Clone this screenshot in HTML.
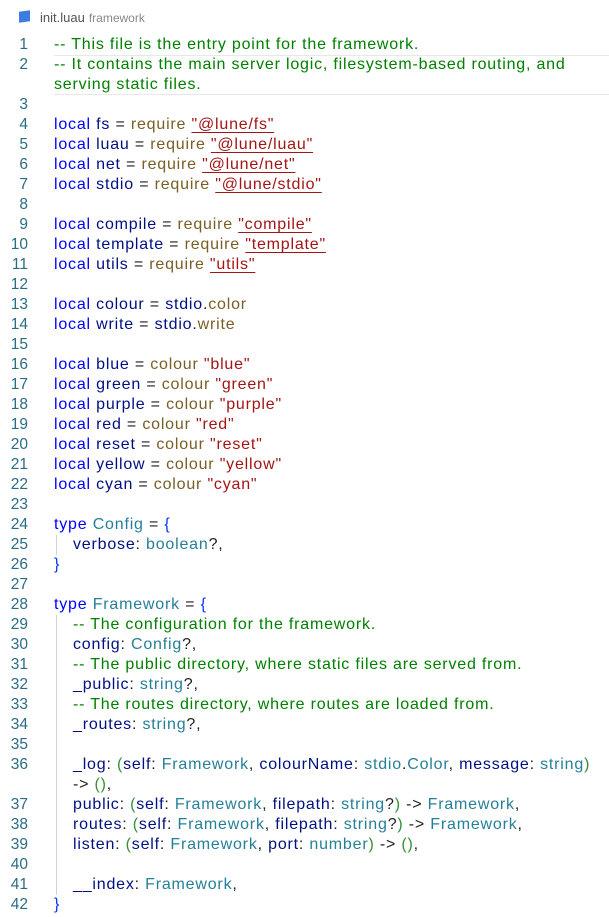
<!DOCTYPE html>
<html><head><meta charset="utf-8"><style>
body{margin:0;background:#fff;width:609px;height:917px;overflow:hidden;font-family:"Liberation Sans",sans-serif;}
.tab{position:absolute;left:0;top:0;height:34px;width:609px;}
.tab .ic{position:absolute;left:19px;top:11px;width:11px;height:11px;background:#3b7de0;transform:skewY(-8deg);}
.tab .n{position:absolute;left:40px;top:10px;font-size:13px;color:#555;}
.tab .d{font-size:12px;color:#888;margin-left:4px;}
.l{position:absolute;left:0;height:20px;line-height:20px;font-size:16px;white-space:nowrap;width:609px;margin-top:1px;}
.num{position:absolute;left:0;width:28px;text-align:right;color:#2b6c85;font-size:15.5px;}
.c{position:absolute;left:54px;color:#1f1f1f;letter-spacing:0.8px;}
.cm{color:#008000}.k{color:#0000ff}.v{color:#001080}.f{color:#795e26}.s{color:#a31515}.t{color:#267f99}.p1{color:#0431fa}.p2{color:#319331}
.u{text-decoration:underline;text-decoration-color:#a31515;text-underline-offset:3px;}
.hl{position:absolute;left:54px;top:55px;width:560px;height:38px;border:1px solid #e8e8e8;border-left:none}
.g{position:absolute;left:56px;width:1px;background:#d3d3d3;}
</style></head><body>
<div class="tab"><div class="ic"></div><div class="n">init.luau<span class="d">framework</span></div></div>
<div class="hl"></div>
<div class="g" style="top:535px;height:20px"></div>
<div class="g" style="top:615px;height:280px"></div>
<div class="l" style="top:34px"><span class="num">1</span><span class="c cm">-- This file is the entry point for the framework.</span></div>
<div class="l" style="top:54px"><span class="num">2</span><span class="c cm">-- It contains the main server logic, filesystem-based routing, and</span></div>
<div class="l" style="top:74px"><span class="c cm">serving static files.</span></div>
<div class="l" style="top:94px"><span class="num">3</span></div>
<div class="l" style="top:114px"><span class="num">4</span><span class="c"><span class="k">local</span> <span class="v">fs</span> = <span class="f">require</span> <span class="s u">"@lune/fs"</span></span></div>
<div class="l" style="top:134px"><span class="num">5</span><span class="c"><span class="k">local</span> <span class="v">luau</span> = <span class="f">require</span> <span class="s u">"@lune/luau"</span></span></div>
<div class="l" style="top:154px"><span class="num">6</span><span class="c"><span class="k">local</span> <span class="v">net</span> = <span class="f">require</span> <span class="s u">"@lune/net"</span></span></div>
<div class="l" style="top:174px"><span class="num">7</span><span class="c"><span class="k">local</span> <span class="v">stdio</span> = <span class="f">require</span> <span class="s u">"@lune/stdio"</span></span></div>
<div class="l" style="top:194px"><span class="num">8</span></div>
<div class="l" style="top:214px"><span class="num">9</span><span class="c"><span class="k">local</span> <span class="v">compile</span> = <span class="f">require</span> <span class="s u">"compile"</span></span></div>
<div class="l" style="top:234px"><span class="num">10</span><span class="c"><span class="k">local</span> <span class="v">template</span> = <span class="f">require</span> <span class="s u">"template"</span></span></div>
<div class="l" style="top:254px"><span class="num">11</span><span class="c"><span class="k">local</span> <span class="v">utils</span> = <span class="f">require</span> <span class="s u">"utils"</span></span></div>
<div class="l" style="top:274px"><span class="num">12</span></div>
<div class="l" style="top:294px"><span class="num">13</span><span class="c"><span class="k">local</span> <span class="v">colour</span> = <span class="v">stdio</span>.<span class="f">color</span></span></div>
<div class="l" style="top:314px"><span class="num">14</span><span class="c"><span class="k">local</span> <span class="v">write</span> = <span class="v">stdio</span>.<span class="f">write</span></span></div>
<div class="l" style="top:334px"><span class="num">15</span></div>
<div class="l" style="top:354px"><span class="num">16</span><span class="c"><span class="k">local</span> <span class="v">blue</span> = <span class="f">colour</span> <span class="s">"blue"</span></span></div>
<div class="l" style="top:374px"><span class="num">17</span><span class="c"><span class="k">local</span> <span class="v">green</span> = <span class="f">colour</span> <span class="s">"green"</span></span></div>
<div class="l" style="top:394px"><span class="num">18</span><span class="c"><span class="k">local</span> <span class="v">purple</span> = <span class="f">colour</span> <span class="s">"purple"</span></span></div>
<div class="l" style="top:414px"><span class="num">19</span><span class="c"><span class="k">local</span> <span class="v">red</span> = <span class="f">colour</span> <span class="s">"red"</span></span></div>
<div class="l" style="top:434px"><span class="num">20</span><span class="c"><span class="k">local</span> <span class="v">reset</span> = <span class="f">colour</span> <span class="s">"reset"</span></span></div>
<div class="l" style="top:454px"><span class="num">21</span><span class="c"><span class="k">local</span> <span class="v">yellow</span> = <span class="f">colour</span> <span class="s">"yellow"</span></span></div>
<div class="l" style="top:474px"><span class="num">22</span><span class="c"><span class="k">local</span> <span class="v">cyan</span> = <span class="f">colour</span> <span class="s">"cyan"</span></span></div>
<div class="l" style="top:494px"><span class="num">23</span></div>
<div class="l" style="top:514px"><span class="num">24</span><span class="c"><span class="k">type</span> <span class="t">Config</span> = <span class="p1">{</span></span></div>
<div class="l" style="top:534px"><span class="num">25</span><span class="c" style="left:73px"><span class="v">verbose</span>: <span class="t">boolean</span>?,</span></div>
<div class="l" style="top:554px"><span class="num">26</span><span class="c p1">}</span></div>
<div class="l" style="top:574px"><span class="num">27</span></div>
<div class="l" style="top:594px"><span class="num">28</span><span class="c"><span class="k">type</span> <span class="t">Framework</span> = <span class="p1">{</span></span></div>
<div class="l" style="top:614px"><span class="num">29</span><span class="c cm" style="left:73px">-- The configuration for the framework.</span></div>
<div class="l" style="top:634px"><span class="num">30</span><span class="c" style="left:73px"><span class="v">config</span>: <span class="t">Config</span>?,</span></div>
<div class="l" style="top:654px"><span class="num">31</span><span class="c cm" style="left:73px">-- The public directory, where static files are served from.</span></div>
<div class="l" style="top:674px"><span class="num">32</span><span class="c" style="left:73px"><span class="v">_public</span>: <span class="t">string</span>?,</span></div>
<div class="l" style="top:694px"><span class="num">33</span><span class="c cm" style="left:73px">-- The routes directory, where routes are loaded from.</span></div>
<div class="l" style="top:714px"><span class="num">34</span><span class="c" style="left:73px"><span class="v">_routes</span>: <span class="t">string</span>?,</span></div>
<div class="l" style="top:734px"><span class="num">35</span></div>
<div class="l" style="top:754px"><span class="num">36</span><span class="c" style="left:73px"><span class="v">_log</span>: <span class="p2">(</span><span class="v">self</span>: <span class="t">Framework</span>, <span class="v">colourName</span>: <span class="t">stdio</span>.<span class="t">Color</span>, <span class="v">message</span>: <span class="t">string</span><span class="p2">)</span></span></div>
<div class="l" style="top:774px"><span class="c" style="left:73px">-&gt; <span class="p2">()</span>,</span></div>
<div class="l" style="top:794px"><span class="num">37</span><span class="c" style="left:73px"><span class="v">public</span>: <span class="p2">(</span><span class="v">self</span>: <span class="t">Framework</span>, <span class="v">filepath</span>: <span class="t">string</span>?<span class="p2">)</span> -&gt; <span class="t">Framework</span>,</span></div>
<div class="l" style="top:814px"><span class="num">38</span><span class="c" style="left:73px"><span class="v">routes</span>: <span class="p2">(</span><span class="v">self</span>: <span class="t">Framework</span>, <span class="v">filepath</span>: <span class="t">string</span>?<span class="p2">)</span> -&gt; <span class="t">Framework</span>,</span></div>
<div class="l" style="top:834px"><span class="num">39</span><span class="c" style="left:73px"><span class="v">listen</span>: <span class="p2">(</span><span class="v">self</span>: <span class="t">Framework</span>, <span class="v">port</span>: <span class="t">number</span><span class="p2">)</span> -&gt; <span class="p2">()</span>,</span></div>
<div class="l" style="top:854px"><span class="num">40</span></div>
<div class="l" style="top:874px"><span class="num">41</span><span class="c" style="left:73px"><span class="v">__index</span>: <span class="t">Framework</span>,</span></div>
<div class="l" style="top:894px"><span class="num">42</span><span class="c p1">}</span></div>
</body></html>
